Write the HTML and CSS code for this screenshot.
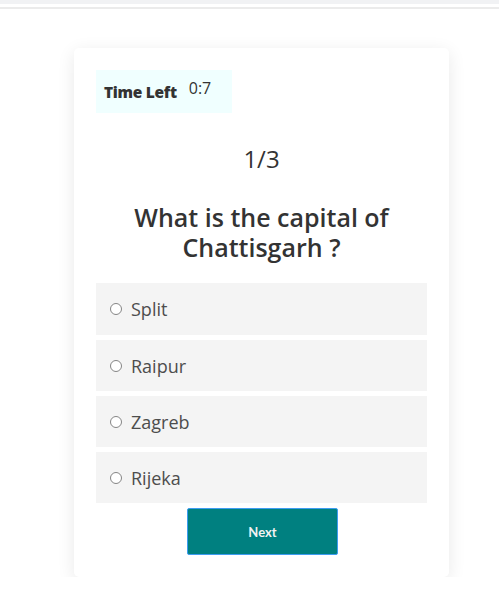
FILE: index.html
```html
<!DOCTYPE html>
<html lang="en">
<head>
<meta charset="utf-8">
<title>Quiz</title>
<link rel="stylesheet" href="styles.css">
</head>
<body>
<div class="topbar"></div>
<div class="rule"></div>
<main class="page">
  <section class="card">
    <div class="timer">
      <span class="timer-label">Time Left</span>
      <span class="timer-value">0:7</span>
    </div>
    <div class="count">1/3</div>
    <h2 class="question">What is the capital of Chattisgarh ?</h2>
    <ul class="options">
      <li class="option"><span class="radio"></span><span class="option-text">Split</span></li>
      <li class="option"><span class="radio"></span><span class="option-text">Raipur</span></li>
      <li class="option"><span class="radio"></span><span class="option-text">Zagreb</span></li>
      <li class="option"><span class="radio"></span><span class="option-text">Rijeka</span></li>
    </ul>
    <div class="actions">
      <button class="next" type="button">Next</button>
    </div>
  </section>
</main>
</body>
</html>
```
FILE: styles.css
```css
* { box-sizing: border-box; }
html, body { margin: 0; padding: 0; background: #ffffff; }
body { font-family: "Open Sans", "Noto Sans", sans-serif; color: #333; }

.topbar { height: 4px; background: #f1f2f4; }
.rule { height: 5px; border-top: 3px solid #ffffff; background: #ebebeb; }

.page { padding: 39px 0 0 74px; }

.card {
  width: 375px;
  background: #fff;
  border-radius: 5px;
  box-shadow: 0 4px 18px rgba(0, 0, 0, 0.09);
  padding: 22px 22px 22px;
}

.timer {
  width: 136px;
  height: 43px;
  background: #f0ffff;
  display: flex;
  align-items: flex-start;
  padding: 9px 0 0 8px;
  gap: 12px;
}
.timer-label {
  font-weight: 800;
  font-size: 15.5px;
  color: #333;
  line-height: 22px;
  padding-top: 2px;
  letter-spacing: -0.3px;
}
.timer-value {
  font-size: 16px;
  color: #333;
  line-height: 22px;
  margin-top: -2px;
}

.count {
  text-align: center;
  font-size: 24px;
  line-height: 32px;
  margin-top: 30px;
  color: #333;
}

.question {
  text-align: center;
  font-size: 25px;
  font-weight: 600;
  line-height: 30px;
  margin: 27px 0 0;
  padding: 0;
  color: #333;
}

.options {
  list-style: none;
  margin: 21px 0 0;
  padding: 0;
  display: flex;
  flex-direction: column;
  gap: 5px;
}
.option {
  height: 51px;
  background: #f4f4f4;
  display: flex;
  align-items: center;
  padding-left: 14px;
  gap: 9px;
}
.option:first-child { height: 52px; }
.radio {
  width: 12px;
  height: 12px;
  border: 1px solid #858585;
  border-radius: 50%;
  background: #fff;
  flex: none;
}
.option-text {
  font-size: 18px;
  color: #4d4d4d;
}

.actions {
  display: flex;
  justify-content: center;
  margin-top: 5px;
}
.next {
  width: 151px;
  height: 47px;
  background: #008080;
  border: 1px solid #3d9cf0;
  border-radius: 2px;
  color: #f2f2f2;
  font-family: Lato, "Open Sans", sans-serif;
  font-weight: 700;
  font-size: 13px;
  margin-left: 2px;
}
```
